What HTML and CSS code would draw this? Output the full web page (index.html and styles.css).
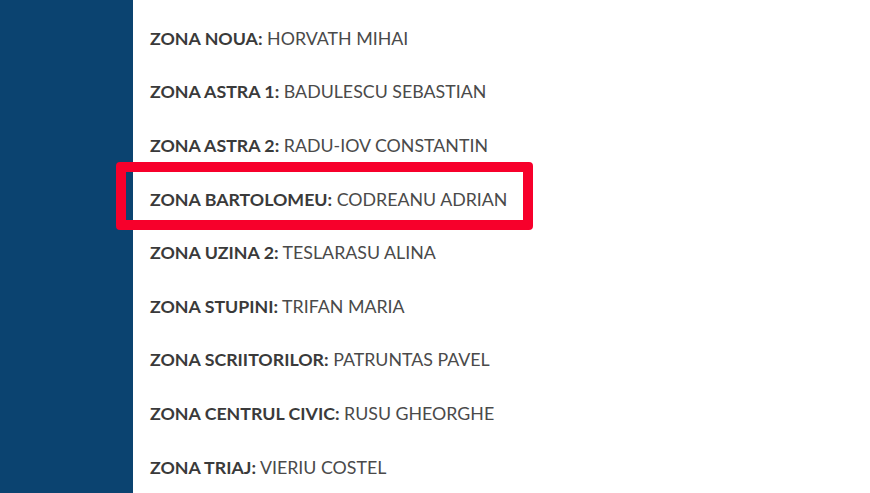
FILE: index.html
```html
<!DOCTYPE html>
<html>
<head>
<meta charset="utf-8">
<link rel="stylesheet" href="styles.css">
</head>
<body>
<div class="page">
  <aside class="sidebar"></aside>
  <main class="content">
    <ul class="list">
      <li class="row"><strong>ZONA NOUA:</strong> HORVATH MIHAI</li>
      <li class="row"><strong>ZONA ASTRA 1:</strong> BADULESCU SEBASTIAN</li>
      <li class="row"><strong>ZONA ASTRA 2:</strong> RADU-IOV CONSTANTIN</li>
      <li class="row highlight"><strong>ZONA BARTOLOMEU:</strong> CODREANU ADRIAN<span class="mark"></span></li>
      <li class="row"><strong>ZONA UZINA 2:</strong> TESLARASU ALINA</li>
      <li class="row"><strong>ZONA STUPINI:</strong> TRIFAN MARIA</li>
      <li class="row"><strong>ZONA SCRIITORILOR:</strong> PATRUNTAS PAVEL</li>
      <li class="row"><strong>ZONA CENTRUL CIVIC:</strong> RUSU GHEORGHE</li>
      <li class="row"><strong>ZONA TRIAJ:</strong> VIERIU COSTEL</li>
    </ul>
  </main>
</div>
</body>
</html>
```

FILE: styles.css
```css
html, body {
  margin: 0;
  padding: 0;
  width: 870px;
  height: 493px;
  overflow: hidden;
  background: #fff;
}
.page {
  display: flex;
  height: 493px;
}
.sidebar {
  width: 133px;
  flex: none;
  background: #0b4370;
}
.content {
  flex: 1;
  padding-left: 17px;
}
.list {
  list-style: none;
  margin: 0;
  padding: 11px 0 0 0;
  display: flex;
  flex-direction: column;
}
.row {
  height: 53.6px;
  display: flex;
  align-items: center;
  font-family: Lato, "Open Sans", sans-serif;
  font-size: 17.8px;
  color: #4a4a4a;
  white-space: pre;
}
.row strong {
  font-weight: 700;
  color: #3a3a3a;
}
.highlight {
  position: relative;
}
.mark {
  position: absolute;
  left: -34px;
  top: -10px;
  width: 417px;
  height: 68px;
  box-sizing: border-box;
  border: 10px solid #f7002b;
  border-radius: 4px;
}
```
